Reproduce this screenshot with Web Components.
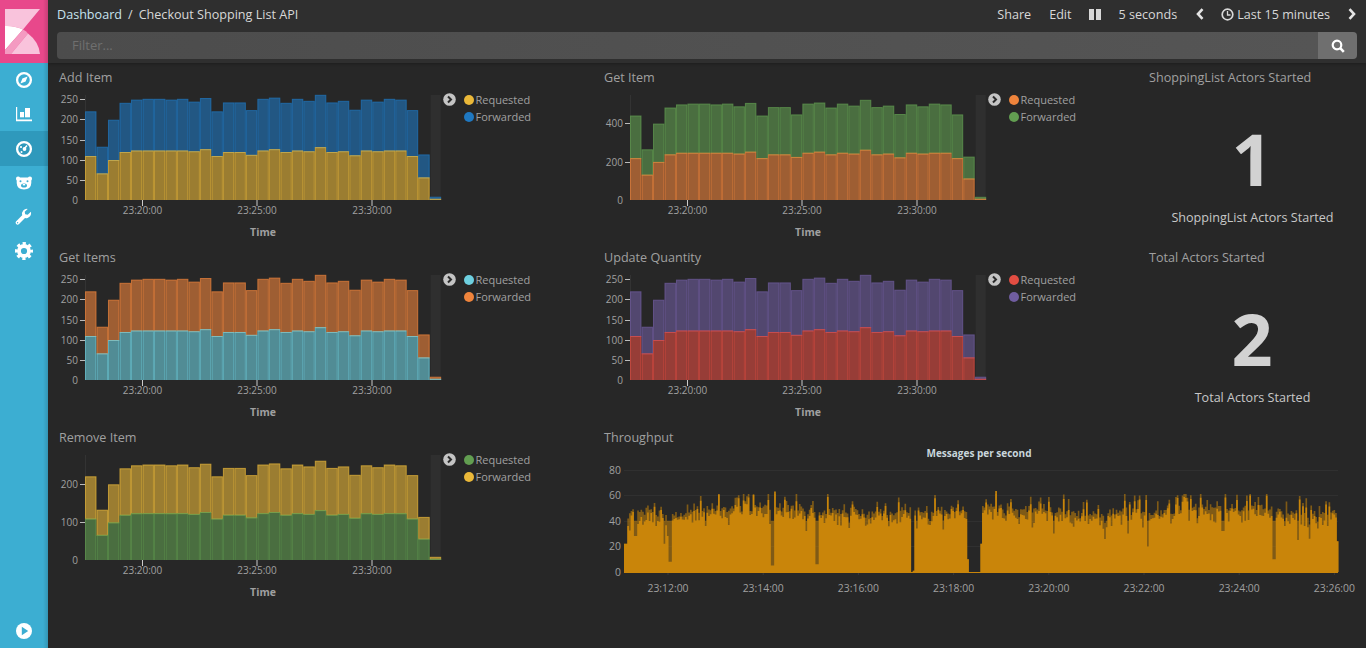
<!DOCTYPE html>
<html><head><meta charset="utf-8"><title>Checkout Shopping List API</title>
<style>
html,body{margin:0;padding:0;background:#272727;height:100%;overflow:hidden}
body{font-family:"Open Sans","Liberation Sans",sans-serif}
</style></head><body>
<kb-app>
  <kb-nav slot="nav"></kb-nav>
  <kb-topbar slot="top"></kb-topbar>
  <kb-panel heading="Add Item"><kb-bars ticks="250,200,150,100,50,0" unit="0.4028" h="0.4028" a="#EAB839" b="#1F78C1"></kb-bars></kb-panel>
  <kb-panel heading="Get Item"><kb-bars ticks="400,200,0" unit="0.1917" h="0.3834" a="#EF843C" b="#629E51"></kb-bars></kb-panel>
  <kb-panel heading="ShoppingList Actors Started"><kb-stat value="1" label="ShoppingList Actors Started"></kb-stat></kb-panel>
  <kb-panel heading="Get Items"><kb-bars ticks="250,200,150,100,50,0" unit="0.4028" h="0.4028" a="#6ED0E0" b="#EF843C"></kb-bars></kb-panel>
  <kb-panel heading="Update Quantity"><kb-bars ticks="250,200,150,100,50,0" unit="0.4028" h="0.4028" a="#E24D42" b="#705DA0"></kb-bars></kb-panel>
  <kb-panel heading="Total Actors Started"><kb-stat value="2" label="Total Actors Started"></kb-stat></kb-panel>
  <kb-panel heading="Remove Item"><kb-bars ticks="200,100,0" unit="0.38" h="0.38" a="#629E51" b="#EAB839"></kb-bars></kb-panel>
  <kb-panel heading="Throughput"><kb-throughput></kb-throughput></kb-panel>
</kb-app>
<script>
class KbApp extends HTMLElement{constructor(){super();this.attachShadow({mode:'open'}).innerHTML=`<style>
:host{display:flex;width:1366px;height:648px;background:#272727;color:#a0a0a0}
.main{flex:1;display:flex;flex-direction:column;min-width:0}
.grid{display:grid;grid-template-columns:545px 545px 1fr;grid-auto-rows:180px;padding:4px 0 0 1px}
</style><slot name="nav"></slot><div class="main"><slot name="top"></slot><div class="grid"><slot></slot></div></div>`}}
class KbNav extends HTMLElement{constructor(){super();this.attachShadow({mode:'open'}).innerHTML=`<style>
:host{display:flex;flex-direction:column;width:48px;height:648px;background:#3CAED2;position:relative;flex:none}
:host::after{content:"";position:absolute;top:0;right:0;bottom:0;width:5px;background:linear-gradient(90deg,rgba(0,0,0,0),rgba(0,0,0,.14))}
.logo{height:63px;background:#E8488B;display:flex;align-items:center;justify-content:center;flex:none}
.item{height:34px;display:flex;align-items:center;justify-content:center;flex:none}
.item.on{background:#2F99BC;height:35px}
.spacer{flex:1}
svg{display:block}
.list{display:flex;flex-direction:column}
</style>
<div class="logo"><svg width="48" height="63" viewBox="0 0 48 63">
<path d="M5 9H40L23 29.5Q14.500 25.500 5 26Z" fill="#F9C3DC"/>
<path d="M5 26Q14.500 25.500 23 29.500L5 50Z" fill="#fff"/>
<path d="M23 29.500Q26 31 28 33.500L11 54H5V50Z" fill="#F49AC1"/>
<path d="M28 33.500Q39 42 40 54H11Z" fill="#F9C3DC"/>
</svg></div>
<div class="list">
<div class="item"><svg width="20" height="20" viewBox="0 0 20 20"><circle cx="10" cy="10" r="6.900" fill="none" stroke="#fff" stroke-width="2.300"/><path d="M13.600 6.400 11.600 11.600 6.400 13.600 8.400 8.400Z" fill="#fff"/></svg></div>
<div class="item"><svg width="20" height="20" viewBox="0 0 20 20" style="margin-top:-1px"><path d="M2 3H3.200V15.600H18V17.300H2Z" fill="#fff"/><rect x="6" y="8" width="4" height="5.300" fill="#fff"/><rect x="11" y="4" width="5" height="9.300" fill="#fff"/></svg></div>
<div class="item on"><svg width="20" height="20" viewBox="0 0 20 20"><circle cx="10" cy="10" r="6.900" fill="none" stroke="#fff" stroke-width="2.300"/><circle cx="10.500" cy="10" r="1.900" fill="#fff"/><path d="M10 10 13 6.500" stroke="#fff" stroke-width="1.500"/><circle cx="7" cy="8" r="1.100" fill="#fff"/><circle cx="7.500" cy="13" r="1" fill="#fff"/></svg></div>
<div class="item" style="height:33px"><svg width="20" height="20" viewBox="0 0 20 20"><path d="M2 5.500Q2 3.500 4 3.500 5.500 3.500 6 4.500H14Q14.500 3.500 16 3.500 18 3.500 18 5.500 18 7 17.300 7.500V10Q17 16.500 10 16.500 3 16.500 2.700 10V7.500Q2 7 2 5.500Z" fill="#fff"/><circle cx="6.500" cy="8.300" r="1" fill="#3CAED2"/><circle cx="13.500" cy="8.300" r="1" fill="#3CAED2"/><ellipse cx="10" cy="12.500" rx="3" ry="2" fill="#3CAED2"/><rect x="8.800" y="11" width="2.400" height="1.400" fill="#fff"/></svg></div>
<div class="item" style="height:36px"><svg width="20" height="20" viewBox="0 0 20 20"><path d="M13.700 1.900 10.700 4.700 11.200 7.200 13.700 7.700 16.900 4.700A5 5 0 0 1 11 11L4.800 17.200A2 2 0 0 1 2 14.400L8.200 8.200A5 5 0 0 1 13.700 1.900Z" fill="#fff"/><circle cx="3.600" cy="15.800" r=".7" fill="#3CAED2"/></svg></div>
<div class="item" style="height:32px"><svg width="20" height="20" viewBox="0 0 20 20"><circle cx="10" cy="10" r="5" fill="none" stroke="#fff" stroke-width="3.800"/><circle cx="10" cy="10" r="7.500" fill="none" stroke="#fff" stroke-width="3" stroke-dasharray="3.200 2.690" stroke-dashoffset="1.600"/></svg></div>
</div>
<div class="spacer"></div>
<div class="item"><svg width="20" height="20" viewBox="0 0 20 20"><circle cx="10" cy="10" r="8" fill="#fff"/><path d="M7.800 5.800V14.200L14.200 10Z" fill="#3CAED2"/></svg></div>`}}
class KbTopbar extends HTMLElement{constructor(){super();this.attachShadow({mode:'open'}).innerHTML=`<style>
:host{display:flex;flex-direction:column;height:63px;background:#2F2F2F;box-sizing:border-box;padding:0 8px 0 9px;font-size:12.6px;color:#D8D8D8;flex:none;box-shadow:0 1px 3px rgba(0,0,0,.25)}
.row{height:32px;display:flex;align-items:center;justify-content:space-between;padding:0 2px 4px 0;box-sizing:border-box}
.crumbs{display:flex;gap:6px;white-space:nowrap}
.crumbs b{font-weight:400;color:#C6E4EF}
.act{display:flex;align-items:center;white-space:nowrap}
svg{display:block}
.filter{height:27px;display:flex;border-radius:4px;overflow:hidden;margin-right:1px}
.in{flex:1;background:linear-gradient(90deg,#4C4C4C,#555);color:#6f6f6f;font-size:13px;line-height:27px;padding-left:15px}
.btn{width:39px;background:#6F6F6F;display:flex;align-items:center;justify-content:center}
</style>
<div class="row"><div class="crumbs"><b>Dashboard</b><span>/</span><span>Checkout Shopping List API</span></div>
<div class="act">
<span>Share</span><span style="margin-left:18px">Edit</span>
<svg style="margin-left:17px" width="12" height="11" viewBox="0 0 12 11"><rect width="5" height="11" fill="#D8D8D8"/><rect x="7" width="5" height="11" fill="#D8D8D8"/></svg>
<span style="margin-left:18px">5 seconds</span>
<svg style="margin-left:19px" width="8" height="12" viewBox="0 0 8 12"><path d="M6.500 1.200 2 6 6.500 10.800" fill="none" stroke="#E4E4E4" stroke-width="2.600"/></svg>
<svg style="margin-left:17px" width="13" height="13" viewBox="0 0 13 13"><circle cx="6.500" cy="6.500" r="5.300" fill="none" stroke="#D8D8D8" stroke-width="1.700"/><path d="M6.500 3V7H9.500" fill="none" stroke="#D8D8D8" stroke-width="1.300"/></svg>
<span style="margin-left:3px">Last 15 minutes</span>
<svg style="margin-left:18px" width="8" height="12" viewBox="0 0 8 12"><path d="M1.500 1.200 6 6 1.500 10.800" fill="none" stroke="#E4E4E4" stroke-width="2.600"/></svg>
</div></div>
<div class="filter"><div class="in">Filter...</div><div class="btn"><svg width="14" height="14" viewBox="0 0 14 14"><circle cx="6" cy="6" r="4.300" fill="none" stroke="#fff" stroke-width="2.200"/><path d="M9.200 9.200 12.800 12.800" stroke="#fff" stroke-width="2.600"/></svg></div></div>`}}
class KbPanel extends HTMLElement{constructor(){super();this.attachShadow({mode:'open'})}connectedCallback(){this.shadowRoot.innerHTML=`<style>
:host{display:block;height:180px;min-width:0}
.t{height:20px;line-height:22px;padding-left:10px;font-size:12.6px;color:#A0A0A0;white-space:nowrap}
</style><div class="t">${this.getAttribute('heading')}</div><slot></slot>`}}
const REQ=[108,65,98,118,122,122,122,122,122,120,125,108,118,118,111,122,125,118,122,120,130,118,120,110,122,120,122,122,108,55,2];
const TOT=[219,131,198,240,248,250,250,248,250,243,252,219,241,241,222,250,253,240,250,245,260,241,245,223,248,243,250,248,222,112,7];
class KbBars extends HTMLElement{constructor(){super();this.attachShadow({mode:'open'})}connectedCallback(){
 const g=k=>this.getAttribute(k),ticks=g('ticks').split(',').map(Number),u=+g('unit'),h=+g('h'),A=g('a'),B=g('b');
 const x0=36,y0=113,bw=11.49;let s='',b='';
 s+=`<rect x="${x0+345.7}" y="8" width="10" height="105" fill="#2F2F2F"/>`;
 s+=`<line x1="${x0+.5}" y1="8" x2="${x0+.5}" y2="113" stroke="#333"/>`;
 ticks.forEach(t=>{const y=Math.round(y0-t*u);s+=`<text x="29" y="${y+4}" text-anchor="end">${t}</text>`;if(t)s+=`<line x1="${x0-5}" x2="${x0}" y1="${y+.5}" y2="${y+.5}" stroke="#bbb"/>`});
 [[93.5,'23:20:00'],[208,'23:25:00'],[323,'23:30:00']].forEach(([x,l])=>{s+=`<line x1="${x}" x2="${x}" y1="113" y2="119" stroke="#ccc"/><text x="${x}" y="127" text-anchor="middle">${l}</text>`});
 s+=`<text x="214" y="149" text-anchor="middle" font-weight="700" font-size="10.500">Time</text>`;
 REQ.forEach((r,i)=>{const x=x0+i*bw,ra=r*h,t=TOT[i]*h;
  b+=`<rect x="${(x+.5).toFixed(2)}" y="${(y0-t).toFixed(1)}" width="${bw-1}" height="${(t-ra).toFixed(1)}" fill="${B}" fill-opacity=".6" stroke="${B}" stroke-opacity=".7"/>`;
  b+=`<rect x="${(x+.5).toFixed(2)}" y="${(y0-ra).toFixed(1)}" width="${bw-1}" height="${(ra+2).toFixed(1)}" fill="${A}" fill-opacity=".6" stroke="${A}" stroke-opacity=".7"/>`;});
 s+=`<clipPath id="c"><rect x="0" y="0" width="394" height="${y0}"/></clipPath><g clip-path="url(#c)">${b}</g>`;
 this.shadowRoot.innerHTML=`<style>
:host{display:flex;height:160px}
svg{display:block;flex:none;font:10px "Open Sans",sans-serif;fill:#A0A0A0}
.tg{width:13px;height:13px;margin:6px 0 0 -0.5px;flex:none}
.lg{margin:4px 0 0 8px;font-size:11px;color:#A0A0A0;line-height:17px}
.li{display:flex;align-items:center;gap:2px;height:17px;white-space:nowrap}
.d{width:10px;height:10px;border-radius:50%}
</style>
<svg width="394" height="160">${s}</svg>
<svg class="tg" viewBox="0 0 13 13"><circle cx="6.500" cy="6.500" r="6.300" fill="#C4C4C4"/><path d="M5 3.500 8 6.500 5 9.500" fill="none" stroke="#2a2a2a" stroke-width="2"/></svg>
<div class="lg"><div class="li"><span class="d" style="background:${A}"></span>Requested</div><div class="li"><span class="d" style="background:${B}"></span>Forwarded</div></div>`}}
class KbStat extends HTMLElement{constructor(){super();this.attachShadow({mode:'open'})}connectedCallback(){this.shadowRoot.innerHTML=`<style>
:host{display:flex;flex-direction:column;align-items:center;height:160px;padding-top:35px;box-sizing:border-box}
.n{font-size:72px;line-height:72px;font-weight:700;color:#D2D2D2;margin-left:-1px}
.l{font-size:12.6px;line-height:20px;margin-top:14px;color:#C8C8C8;white-space:nowrap}
</style><div class="n">${this.getAttribute('value')}</div><div class="l">${this.getAttribute('label')}</div>`}}
class KbThroughput extends HTMLElement{constructor(){super();this.attachShadow({mode:'open'})}connectedCallback(){
 let seed=12345;const R=()=>(seed=(seed*1664525+1013904223)>>>0)/4294967296;
 const ox=594,oy=447,X=x=>x-ox,y0=572-oy,pu=1.281;
 let s='';
 [80,60,40,20].forEach(v=>{const y=Math.round(y0-v*pu)+.5;s+=`<line x1="${X(624)}" x2="${X(1338)}" y1="${y}" y2="${y}" stroke="#303030"/>`});
 [80,60,40,20,0].forEach(v=>{const y=y0-v*pu;s+=`<text x="${X(621)}" y="${y+4}" text-anchor="end">${v}</text>`});
 for(let i=0;i<8;i++){const x=668+i*95.2;s+=`<text x="${X(x)}" y="${y0+20}" text-anchor="middle">23:${12+2*i}:00</text><line x1="${X(x)}" x2="${X(x)}" y1="${y0}" y2="${y0+3}" stroke="#3a3a3a"/>`}
 s+=`<text x="${X(979)}" y="10" text-anchor="middle" font-size="10" font-weight="700" style="fill:#C9D6DC">Messages per second</text>`;
 const dips=[[663.500,22],[666.500,28],[669.500,8],[772,5],[816,6],[705,36],[635,28],[911.500,0],[912.500,1],[916,34],[1106,35],[1127,30],[1147,20],[1272,0],[1273,10],[1222,32],[1197,38],[1297,25],[1053,30]];
 const dw=1.65;let top=`M${X(624)} ${y0}`,sol=top;
 for(let x=624;x<1338;x+=dw){
  const lf=2.5*Math.sin(x/37)+1.5*Math.sin(x/11);
  let v=45+lf+R()*6+(R()<.32?R()*13:0);
  if(R()<.08)v-=6;
  let w=v-2-R()*R()*12;
  if(x<626)v=w=22; if(x>1336)v=w=24;
  dips.forEach(([a,b])=>{if(Math.abs(x-a)<dw*.7){w=b;v=b<=1?b:Math.max(b+4,40)}});
  if(x>966.5&&x<981){v=w=x<968?10:(x>979.500?22:0)}
  v=Math.min(v,61);
  const nx=(X(x)+dw).toFixed(2);
  top+=`V${(y0-v*pu).toFixed(1)}H${nx}`;
  sol+=`V${(y0-w*pu).toFixed(1)}H${nx}`;
 }
 top+=`V${y0}Z`;sol+=`V${y0}Z`;
 s+=`<path d="${top}" fill="#C9850A" fill-opacity=".55"/><path d="${sol}" fill="#C9850A"/><line x1="${X(624)}" x2="${X(1338)}" y1="${y0+.5}" y2="${y0+.5}" stroke="#C9850A"/>`;
 this.shadowRoot.innerHTML=`<style>:host{display:block;height:160px}svg{display:block;font:10.400px "Open Sans",sans-serif;fill:#A0A0A0}</style><svg width="772" height="160">${s}</svg>`}}
[['kb-app',KbApp],['kb-nav',KbNav],['kb-topbar',KbTopbar],['kb-panel',KbPanel],['kb-bars',KbBars],['kb-stat',KbStat],['kb-throughput',KbThroughput]].forEach(([n,c])=>customElements.define(n,c));
</script></body></html>
